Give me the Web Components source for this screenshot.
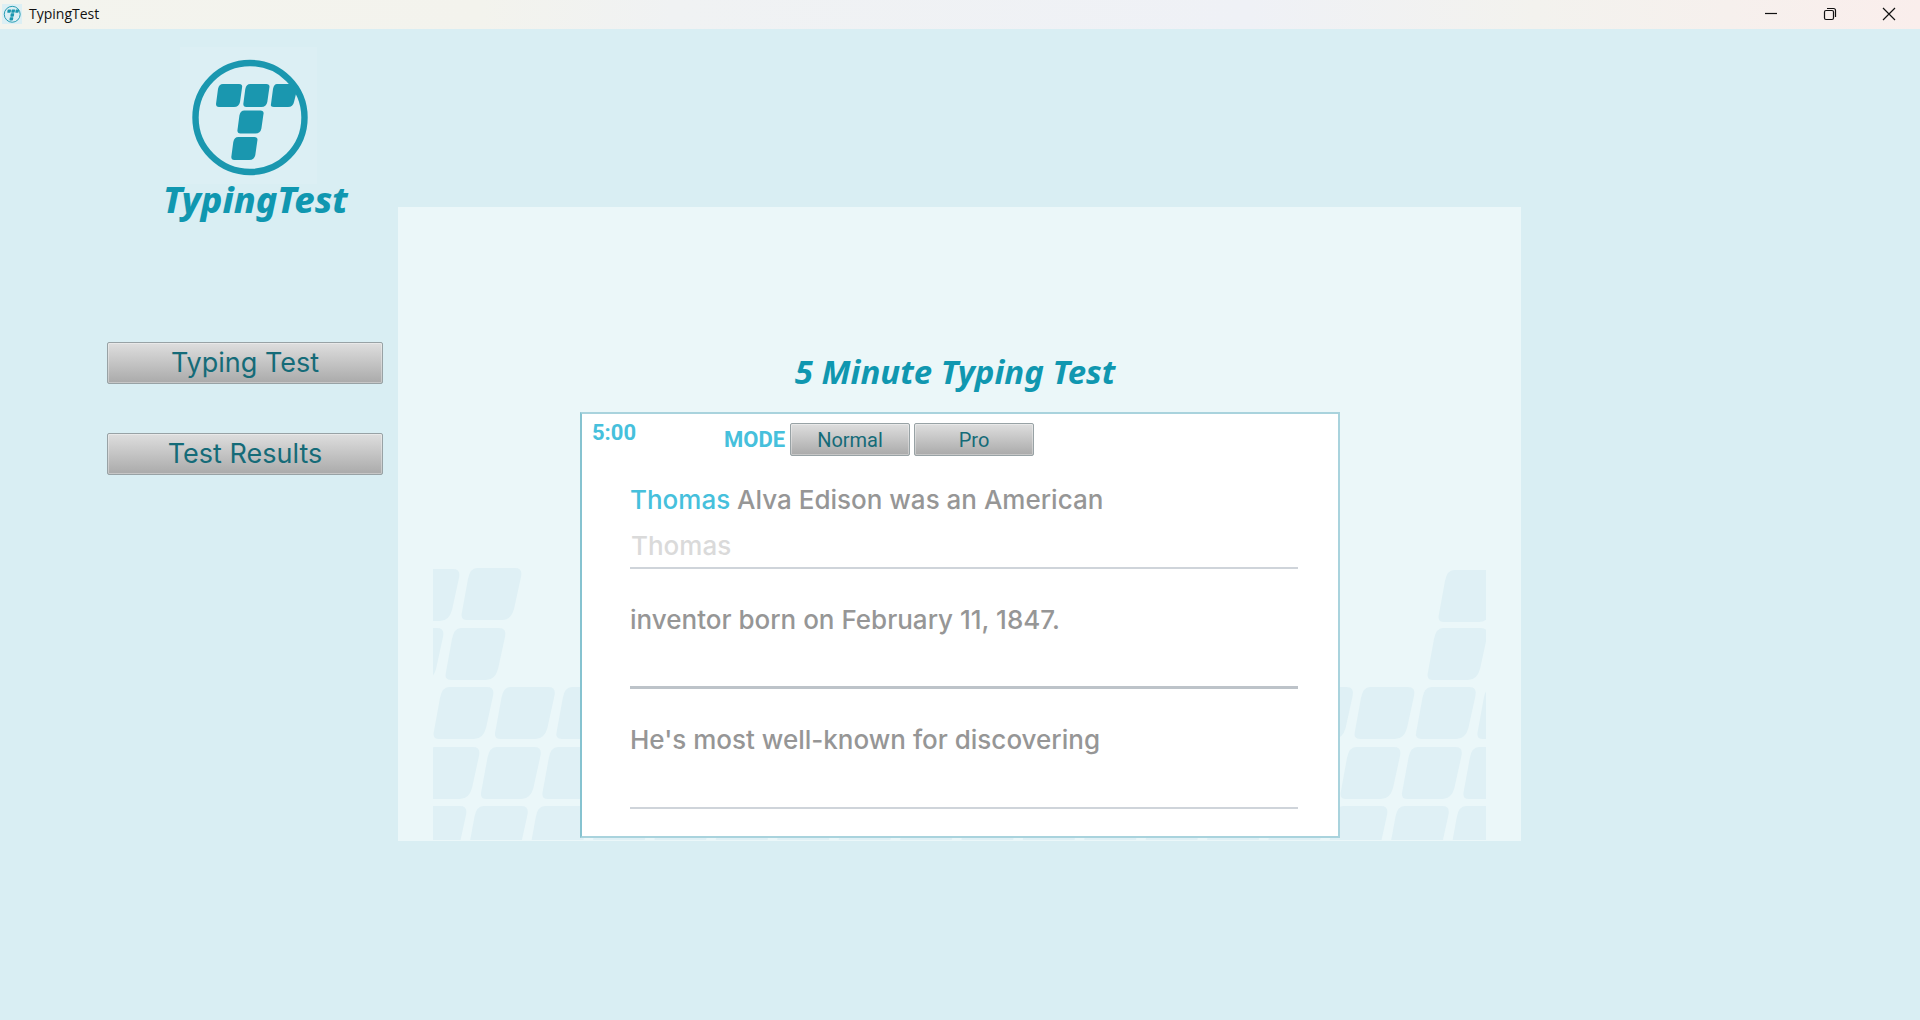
<!DOCTYPE html>
<html lang="en">
<head>
<meta charset="utf-8">
<title>TypingTest</title>
<style>
html,body{margin:0;min-height:100vh}
body{background:#d9eef3;font-family:Inter,"Noto Sans",sans-serif}
</style>
</head>
<body>
<typing-app></typing-app>
<script>
const define = (name, html, init) => customElements.define(name, class extends HTMLElement {
  constructor() {
    super();
    const t = document.createElement('template');
    t.innerHTML = html;
    this.attachShadow({mode: 'open'}).append(t.content.cloneNode(true));
    if (init) init(this, this.shadowRoot);
  }
});

define('brand-mark', `
<style>:host{display:block}svg{display:block;width:100%;height:100%;background:#dceff4}</style>
<svg viewBox="0 0 137 137" aria-hidden="true">
  <g fill="#1a97af">
    <circle cx="70" cy="70.500" r="54.5" fill="none" stroke="#1a97af" stroke-width="6.4"/>
    <path d="M43 37H59Q63 37 62 41L60 55Q59 60 54 60H39Q36 60 36 57L38 42Q39 37 43 37Z"/>
    <path transform="translate(27.3 0)" d="M43 37H59Q63 37 62 41L60 55Q59 60 54 60H39Q36 60 36 57L38 42Q39 37 43 37Z"/>
    <path d="M97 37H113L119 45L116 47L114 55Q113 60 108 60H94Q90 60 91 57L93 42Q94 37 97 37Z"/>
    <path transform="translate(21.4 26.6)" d="M43 37H59Q63 37 62 41L60 55Q59 60 54 60H39Q36 60 36 57L38 42Q39 37 43 37Z"/>
    <path transform="translate(15.3 53)" d="M43 37H59Q63 37 62 41L60 55Q59 60 54 60H39Q36 60 36 57L38 42Q39 37 43 37Z"/>
  </g>
</svg>`);

define('window-bar', `
<style>
:host{display:flex;align-items:center;box-sizing:border-box;height:29px;padding:0 2px 1px;background:linear-gradient(90deg,#f3f4ee,#f3f3ed 25%,#f0f2f3 35%,#eff1f6 65%,#f3f2ee 80%,#f6f0ed 90%,#faeeec)}
brand-mark{width:20px;height:20px;margin-right:7px}
.name{flex:1;color:#111;font:14px/20px "Open Sans",sans-serif}
button{width:59px;height:28px;padding:0;border:0;background:none;display:grid;place-items:center}
svg{width:14px;height:14px;fill:none;stroke:#111;stroke-width:1.2}
</style>
<brand-mark></brand-mark><span class="name"><slot></slot></span>
<button aria-label="Minimize"><svg viewBox="0 0 14 14"><path d="M1 6.5H13"/></svg></button>
<button aria-label="Restore"><svg viewBox="0 0 14 14"><rect x="1.5" y="3.5" width="9" height="9" rx="1.5"/><path d="M4 1.5H10.5Q12.5 1.5 12.5 3.5V10"/></svg></button>
<button aria-label="Close"><svg viewBox="0 0 14 14"><path d="M1 1L13 13M13 1L1 13"/></svg></button>`);

define('metal-button', `
<style>
:host{display:block}
button{display:block;width:100%;height:100%;padding:0;border:1px solid #98a2a5;border-radius:2px;background:linear-gradient(#dedede,#aaa);box-shadow:inset 0 0 0 1px #ffffff55;color:#156b78;font:inherit}
</style>
<button><slot></slot></button>`);

define('app-sidebar', `
<style>
:host{display:flex;flex-direction:column;align-items:flex-start;padding:18px 0 0 107px}
brand-mark{width:137px;height:137px;margin-left:73px}
.word{margin:-8px 0 118px 56px;color:#1097b0;font:italic 800 36px/48px "Noto Sans",sans-serif}
nav{display:flex;flex-direction:column;gap:49px;width:276px}
metal-button{height:42px;font:27px/36px Inter,sans-serif}
</style>
<brand-mark></brand-mark><div class="word">TypingTest</div>
<nav><metal-button>Typing Test</metal-button><metal-button>Test Results</metal-button></nav>`);

define('key-pattern', `
<style>:host{display:block}svg{display:block;width:100%;height:auto}</style>
<svg viewBox="0 0 1123 634" aria-hidden="true">
  <clipPath id="c"><path d="M35 350H1088V633H35Z"/></clipPath>
  <g clip-path="url(#c)" fill="#dff0f5"></g>
</svg>`, (el, root) => {
  const g = root.querySelector('g');
  const tile = (x, y) => {
    const p = document.createElementNS('http://www.w3.org/2000/svg', 'path');
    p.setAttribute('transform', 'translate(' + x + ' ' + y + ')');
    p.setAttribute('d', 'M16 0H54Q62 0 60 9L53 41Q50 52 41 52H6Q-1 52 1 44L7 11Q9 0 16 0Z');
    g.append(p);
  };
  [[1,362],[63,361],[-15,421],[47,421],[1040,363],[1029,421]].forEach(([x, y]) => tile(x, y));
  [[35,480],[21,540],[8,599]].forEach(([x, y]) => {
    for (let i = -1; i < 18; i++) tile(x + i * 61.4, y);
  });
});

define('typing-line', `
<style>
:host{display:block;height:120px;color:#969696;font:500 26px/32px Inter,sans-serif}
label{display:block;white-space:nowrap}
input{display:block;box-sizing:border-box;width:100%;height:53px;padding:8px 0 0 1px;border:0;border-bottom:2px solid #cfd4da;border-radius:0;background:none;color:#dadada;font:inherit;outline:0}
:host([current]) input{border-bottom-color:#bdc3c9;border-bottom-width:3px}
</style>
<label for="entry"><slot></slot></label><input id="entry">`, (el, root) => {
  root.getElementById('entry').value = el.getAttribute('typed') || '';
});

define('test-card', `
<style>
:host{display:block;box-sizing:border-box;background:#fff;border:2px solid #a9d3dd;border-left-color:#86c3d0}
.bar{display:flex;align-items:center;height:51px;padding-left:10px;color:#46c0dc;font:700 22px/28px Roboto,sans-serif}
.time{align-self:flex-start;width:132px;padding-top:5px}
.mode{width:66px}
metal-button{width:120px;height:33px;margin-right:4px;font:20px/28px Roboto,sans-serif}
.lines{padding:19px 40px 0 48px}
b{color:#46c0dc;font-weight:inherit}
</style>
<div class="bar"><span class="time">5:00</span><span class="mode">MODE</span><metal-button>Normal</metal-button><metal-button>Pro</metal-button></div>
<div class="lines">
<typing-line typed="Thomas"><b>Thomas</b> Alva Edison was an American</typing-line>
<typing-line current>inventor born on February 11, 1847.</typing-line>
<typing-line>He's most well-known for discovering</typing-line>
</div>`);

define('test-stage', `
<style>
:host{display:grid;background:#ebf7f9;overflow:hidden}
key-pattern,.content{grid-area:1/1;min-width:0}
key-pattern{align-self:end}
.content{z-index:1;display:flex;flex-direction:column;padding:141px 181px 3px 182px}
h1{margin:0 0 16px;padding-right:10px;text-align:center;color:#1097b0;font:italic 700 33px/48px "Noto Sans",sans-serif;white-space:nowrap}
test-card{height:426px}
</style>
<key-pattern></key-pattern>
<div class="content"><h1>5 Minute Typing Test</h1><test-card></test-card></div>`);

define('typing-app', `
<style>
:host{display:block}
main{display:grid;grid-template-columns:398px minmax(0,1fr) 399px;align-items:start}
test-stage{margin-top:178px}
</style>
<window-bar>TypingTest</window-bar>
<main><app-sidebar></app-sidebar><test-stage></test-stage></main>`);
</script>
</body>
</html>
